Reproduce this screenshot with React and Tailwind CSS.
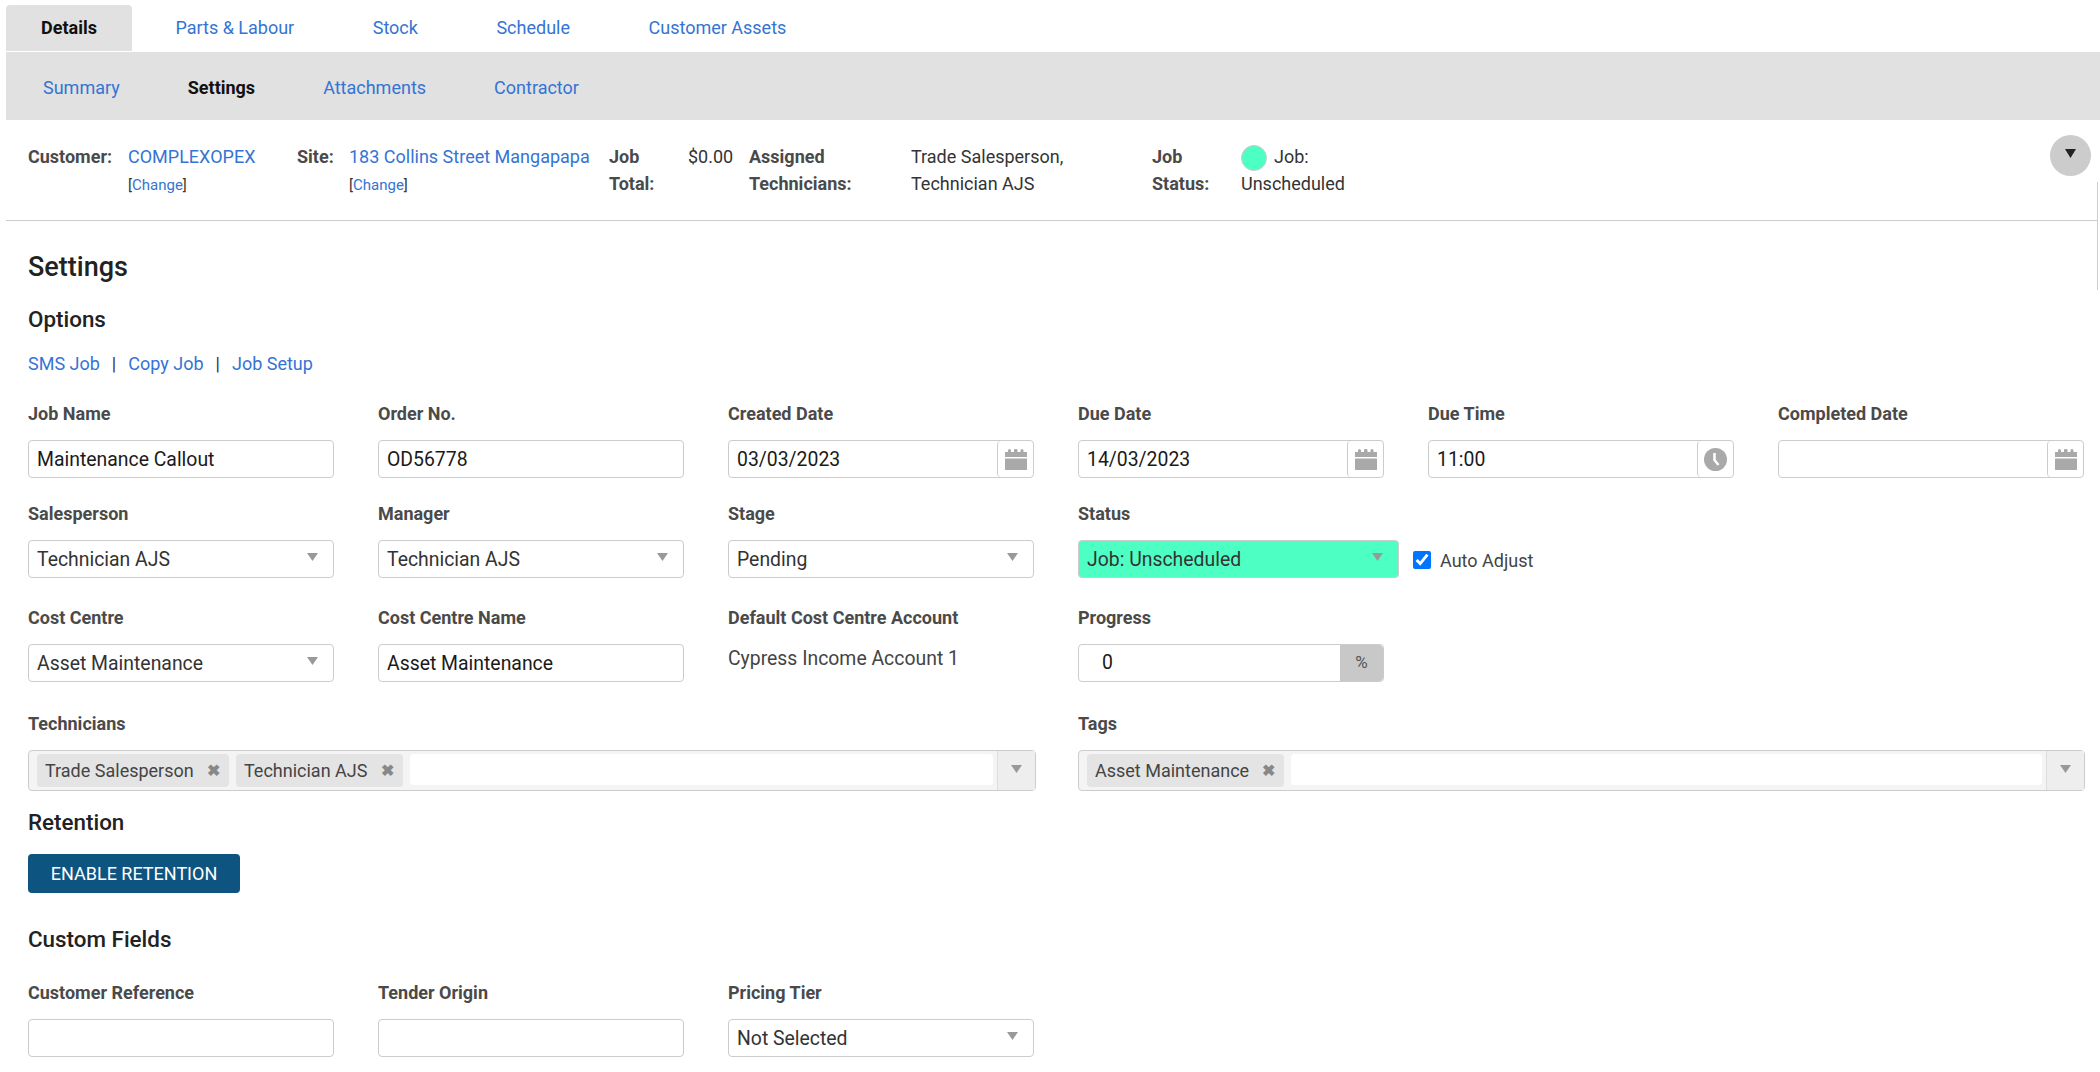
const linkCls = "text-[#3474d4]";

function Arrow({ className = "" }) {
  return (
    <svg width="11" height="8" viewBox="0 0 11 8" className={className}>
      <polygon points="0,0 11,0 5.5,8" fill="#999999" />
    </svg>
  );
}

function CalendarIcon() {
  return (
    <svg width="22" height="21" viewBox="0 0 22 21">
      <path d="M0 3h3V1.5a1.5 1.5 0 0 1 3 0V3h3V1.5a1.5 1.5 0 0 1 3.500 0V3h3V1.500a1.500 1.500 0 0 1 3 0V3H22v5H0z" fill="#a9a9a9" />
      <rect x="0" y="9.500" width="22" height="11.500" fill="#a9a9a9" />
    </svg>
  );
}

function ClockIcon() {
  return (
    <svg width="23" height="23" viewBox="0 0 23 23">
      <circle cx="11.500" cy="11.500" r="11.500" fill="#a9a9a9" />
      <path d="M10.500 5v7l4 5" fill="none" stroke="#ffffff" strokeWidth="2.500" />
    </svg>
  );
}

function Label({ children }) {
  return <div className="h-[26px] mb-[13px] text-[18px] leading-[26px] font-bold text-[#4a4a4a] whitespace-nowrap">{children}</div>;
}

function TextInput({ value = "" }) {
  return (
    <input
      readOnly
      value={value}
      className="block w-full h-[38px] px-[8px] pt-[1px] border border-[#cccccc] rounded-[4px] bg-white text-[19.400px] text-[#1a1a1a] outline-none"
    />
  );
}

function AddonInput({ value = "", icon }) {
  return (
    <div className="flex h-[38px] w-full border border-[#cccccc] rounded-[4px] bg-white">
      <input readOnly value={value} className="min-w-0 flex-1 px-[8px] pt-[1px] bg-transparent text-[19.400px] text-[#1a1a1a] outline-none" />
      <span className="flex w-[36px] shrink-0 items-center justify-center border-l border-[#cccccc] rounded-[4px]">{icon}</span>
    </div>
  );
}

function Select({ value, className = "bg-white text-[#333333] w-full" }) {
  return (
    <div className={`flex h-[38px] items-center justify-between pl-[8px] pr-[15px] border border-[#cccccc] rounded-[4px] text-[19.400px] ${className}`}>
      <span className="pt-[1px]">{value}</span>
      <Arrow className="mb-[4px]" />
    </div>
  );
}

function Chip({ children, width }) {
  return (
    <span className={`flex h-[33px] items-center justify-between pl-[8px] pr-[9px] rounded-[4px] bg-[#e4e4e4] text-[18px] text-[#444444] ${width}`}>
      {children}
      <span className="text-[16px] font-bold text-[#888888] leading-none">✖</span>
    </span>
  );
}

function MultiSelect({ children }) {
  return (
    <div className="flex h-[41px] border border-[#cccccc] rounded-[4px] bg-[#f4f4f4]">
      <div className="flex flex-1 gap-[7px] pl-[8px] pt-[3px] pr-[4px]">
        {children}
        <span className="h-[31px] flex-1 rounded-[4px] bg-white" />
      </div>
      <span className="flex w-[38px] shrink-0 items-center justify-center border-l border-[#dddddd] bg-[#eeeeee]">
        <Arrow className="mb-[4px]" />
      </span>
    </div>
  );
}

function Field({ label, children, className = "" }) {
  return (
    <div className={className}>
      <Label>{label}</Label>
      {children}
    </div>
  );
}

export default function App() {
  return (
    <div className="relative w-[2100px] h-[1072px] overflow-hidden bg-white font-['Roboto',sans-serif] text-[#333333]">
      {/* main tabs */}
      <div className="flex gap-[8.500px] pl-[6px] pt-[5px] h-[52px] text-[18px]">
        <div className="flex h-[46px] items-center pb-[2px] px-[35px] rounded-t-[4px] bg-[#e1e1e1] font-bold text-[#111111]">Details</div>
        {["Parts & Labour", "Stock", "Schedule", "Customer Assets"].map(t => (
          <div key={t} className={`flex h-[46px] items-center pb-[2px] px-[35px] ${linkCls}`}>{t}</div>
        ))}
      </div>

      {/* sub tabs */}
      <div className="ml-[6px] flex h-[68px] items-center gap-[68px] pl-[37px] pt-[3px] bg-[#e1e1e1] text-[18px]">
        <span className={linkCls}>Summary</span>
        <span className="font-bold text-[#111111]">Settings</span>
        <span className={linkCls}>Attachments</span>
        <span className={linkCls}>Contractor</span>
      </div>

      {/* job header */}
      <div className="relative ml-[6px] mr-[2px] h-[101px] border-b border-[#cccccc] pl-[22px] pt-[24px] text-[18px] leading-[26.500px]">
        <div className="flex">
          <div className="w-[100px] font-bold text-[#4a4a4a]">Customer:</div>
          <div className="w-[169px]">
            <div className={linkCls}>COMPLEXOPEX</div>
            <div className="pt-[1px] text-[15px] text-[#333333]">[<span className={linkCls}>Change</span>]</div>
          </div>
          <div className="w-[52px] font-bold text-[#4a4a4a]">Site:</div>
          <div className="w-[260px]">
            <div className={`whitespace-nowrap ${linkCls}`}>183 Collins Street Mangapapa</div>
            <div className="pt-[1px] text-[15px] text-[#333333]">[<span className={linkCls}>Change</span>]</div>
          </div>
          <div className="w-[79px] font-bold text-[#4a4a4a]">Job<br />Total:</div>
          <div className="w-[61px]">$0.00</div>
          <div className="w-[162px] font-bold text-[#4a4a4a]">Assigned<br />Technicians:</div>
          <div className="w-[241px]">Trade Salesperson,<br />Technician AJS</div>
          <div className="w-[89px] font-bold text-[#4a4a4a]">Job<br />Status:</div>
          <div>
            <div className="flex items-center gap-[7px] h-[27px]">
              <span className="w-[26px] h-[26px] rounded-full bg-[#4dffc3] border border-[#cccccc]" />
              Job:
            </div>
            <div>Unscheduled</div>
          </div>
        </div>
        <div className="absolute right-[7px] top-[15px] flex w-[41px] h-[41px] items-center justify-center rounded-full bg-[#cccccc]">
          <svg width="11" height="9" viewBox="0 0 11 9" className="mb-[4px]"><polygon points="0,0 11,0 5.500,9" fill="#222222" /></svg>
        </div>
      </div>
      <div className="absolute left-[2097px] top-[182px] w-px h-[108px] bg-[#cccccc]" />

      {/* settings form */}
      <div className="pl-[28px]">
        <h2 className="mt-[29px] text-[27px] leading-[34px] font-medium text-[#222222]">Settings</h2>
        <h3 className="mt-[20px] text-[22.400px] leading-[30px] font-medium text-[#222222]">Options</h3>
        <div className="mt-[15px] h-[30px] text-[18px] leading-[30px]">
          <span className={linkCls}>SMS Job</span>
          <span className="mx-[12px] text-[#333333]">|</span>
          <span className={linkCls}>Copy Job</span>
          <span className="mx-[12px] text-[#333333]">|</span>
          <span className={linkCls}>Job Setup</span>
        </div>

        <div className="mt-[22px] grid grid-cols-[repeat(6,306px)] gap-x-[44px]">
          <Field label="Job Name"><TextInput value="Maintenance Callout" /></Field>
          <Field label="Order No."><TextInput value="OD56778" /></Field>
          <Field label="Created Date"><AddonInput value="03/03/2023" icon={<CalendarIcon />} /></Field>
          <Field label="Due Date"><AddonInput value="14/03/2023" icon={<CalendarIcon />} /></Field>
          <Field label="Due Time"><AddonInput value="11:00" icon={<ClockIcon />} /></Field>
          <Field label="Completed Date"><AddonInput icon={<CalendarIcon />} /></Field>
        </div>

        <div className="mt-[23px] grid grid-cols-[repeat(6,306px)] gap-x-[44px]">
          <Field label="Salesperson"><Select value="Technician AJS" /></Field>
          <Field label="Manager"><Select value="Technician AJS" /></Field>
          <Field label="Stage"><Select value="Pending" /></Field>
          <Field label="Status" className="col-span-3">
            <div className="flex items-center">
              <Select value="Job: Unscheduled" className="w-[321px] bg-[#4dffc3] text-[#333333]" />
              <label className="ml-[14px] mt-[2px] flex items-center gap-[9px] text-[18px] text-[#444444]">
                <input type="checkbox" defaultChecked className="w-[18px] h-[18px] m-0" />
                Auto Adjust
              </label>
            </div>
          </Field>
        </div>

        <div className="mt-[27px] grid grid-cols-[repeat(6,306px)] gap-x-[44px]">
          <Field label="Cost Centre"><Select value="Asset Maintenance" /></Field>
          <Field label="Cost Centre Name"><TextInput value="Asset Maintenance" /></Field>
          <Field label="Default Cost Centre Account">
            <div className="h-[38px] text-[19.400px] leading-[30px] text-[#444444]">Cypress Income Account 1</div>
          </Field>
          <Field label="Progress">
            <div className="flex h-[38px] border border-[#cccccc] rounded-[4px] bg-white">
              <span className="flex-1 pl-[23px] text-[19.400px] leading-[36px] text-[#1a1a1a]">0</span>
              <span className="flex w-[43px] items-center justify-center bg-[#c8c8c8] text-[17px] text-[#555555] rounded-r-[4px]">%</span>
            </div>
          </Field>
        </div>

        <div className="mt-[29px] grid grid-cols-[1008px_1007px] gap-x-[42px]">
          <Field label="Technicians">
            <MultiSelect>
              <Chip width="w-[192px]">Trade Salesperson</Chip>
              <Chip width="w-[167px]">Technician AJS</Chip>
            </MultiSelect>
          </Field>
          <Field label="Tags">
            <MultiSelect>
              <Chip width="w-[197px]">Asset Maintenance</Chip>
            </MultiSelect>
          </Field>
        </div>

        <h3 className="mt-[16px] text-[22.400px] leading-[30px] font-medium text-[#222222]">Retention</h3>
        <button className="mt-[17px] block w-[212px] h-[39px] rounded-[4px] bg-[#0e5480] text-[18px] text-white">ENABLE RETENTION</button>

        <h3 className="mt-[31px] text-[22.400px] leading-[30px] font-medium text-[#222222]">Custom Fields</h3>
        <div className="mt-[26px] grid grid-cols-[repeat(6,306px)] gap-x-[44px]">
          <Field label="Customer Reference"><TextInput /></Field>
          <Field label="Tender Origin"><TextInput /></Field>
          <Field label="Pricing Tier"><Select value="Not Selected" /></Field>
        </div>
      </div>
    </div>
  );
}
